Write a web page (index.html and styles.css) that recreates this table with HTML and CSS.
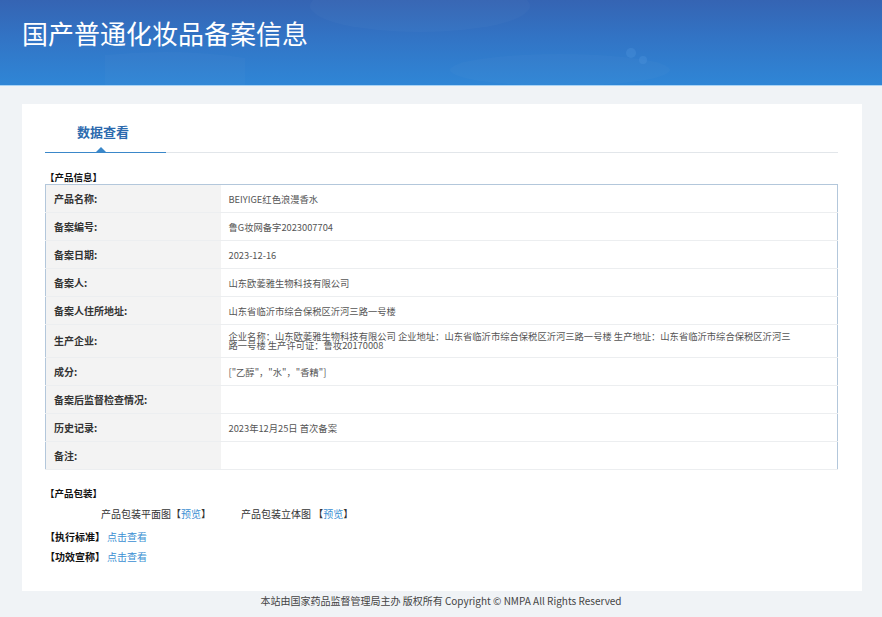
FILE: index.html
```html
<!DOCTYPE html>
<html lang="zh-CN">
<head>
<meta charset="utf-8">
<title>国产普通化妆品备案信息</title>
<link rel="stylesheet" href="styles.css">
</head>
<body>
<header class="banner">
  <svg class="banner-deco" width="882" height="85" viewBox="0 0 882 85" aria-hidden="true">
    <ellipse cx="420" cy="6" rx="110" ry="26" fill="#ffffff" fill-opacity="0.025"/>
    <path d="M105 85 L105 55 Q180 48 245 58 L245 85 Z" fill="#ffffff" fill-opacity="0.02"/>
    <ellipse cx="560" cy="70" rx="110" ry="16" fill="#ffffff" fill-opacity="0.02"/>
    <circle cx="631" cy="53" r="5" fill="#4f95de" fill-opacity="0.35"/>
    <circle cx="643" cy="60" r="4" fill="#4f95de" fill-opacity="0.35"/>
  </svg>
  <h1 class="banner-title">国产普通化妆品备案信息</h1>
</header>

<main class="page">
  <section class="card">
    <div class="tabbar">
      <div class="tab">数据查看</div>
    </div>

    <h2 class="section-title">【产品信息】</h2>
    <table class="info">
      <tbody>
        <tr><th>产品名称:</th><td>BEIYIGE红色浪漫香水</td></tr>
        <tr><th>备案编号:</th><td>鲁G妆网备字2023007704</td></tr>
        <tr><th>备案日期:</th><td>2023-12-16</td></tr>
        <tr><th>备案人:</th><td>山东欧萎雅生物科技有限公司</td></tr>
        <tr><th>备案人住所地址:</th><td>山东省临沂市综合保税区沂河三路一号楼</td></tr>
        <tr class="tall"><th>生产企业:</th><td>企业名称：山东欧萎雅生物科技有限公司 企业地址：山东省临沂市综合保税区沂河三路一号楼 生产地址：山东省临沂市综合保税区沂河三路一号楼 生产许可证：鲁妆20170008</td></tr>
        <tr><th>成分:</th><td>["乙醇"，"水"，"香精"]</td></tr>
        <tr><th>备案后监督检查情况:</th><td></td></tr>
        <tr><th>历史记录:</th><td>2023年12月25日 首次备案</td></tr>
        <tr><th>备注:</th><td></td></tr>
      </tbody>
    </table>

    <h2 class="section-title pack-title">【产品包装】</h2>
    <div class="pack-row">
      <span class="pack-item">产品包装平面图【<a class="link" href="#">预览</a>】</span>
      <span class="pack-item">产品包装立体图 【<a class="link" href="#">预览</a>】</span>
    </div>
    <p class="line first"><b>【执行标准】</b><a class="link" href="#">点击查看</a></p>
    <p class="line"><b>【功效宣称】</b><a class="link" href="#">点击查看</a></p>
  </section>
  <footer class="footer">本站由国家药品监督管理局主办 版权所有 Copyright © NMPA All Rights Reserved</footer>
</main>
</body>
</html>
```

FILE: styles.css
```css
* { box-sizing: border-box; }

html, body {
  margin: 0;
  padding: 0;
}

body {
  background: #f0f3f6;
  font-family: "Noto Sans CJK SC", "Noto Sans", sans-serif;
  color: #333;
}

.banner {
  position: relative;
  height: 86px;
  background: linear-gradient(180deg, #3564b3 0%, #3274c5 45%, #2f86d6 100%);
  border-bottom: 1px solid #a9d3f5;
  overflow: hidden;
}

.banner-deco {
  position: absolute;
  left: 0;
  top: 0;
}

.banner-title {
  position: relative;
  margin: 0;
  padding: 19px 0 0 22px;
  font-size: 26px;
  line-height: 28px;
  font-weight: 400;
  color: #ffffff;
}

.page {
  padding-top: 18px;
}

.card {
  margin: 0 20px 0 22px;
  background: #ffffff;
  padding: 0 24px 26px 23px;
  height: 487px;
}

.tabbar {
  height: 49px;
  border-bottom: 1px solid #e2e6ea;
  display: flex;
  align-items: flex-end;
}

.tab {
  position: relative;
  width: 121px;
  height: 49px;
  padding: 21px 5px 0 0;
  text-align: center;
  font-size: 13px;
  line-height: 14px;
  font-weight: 700;
  color: #2c6aae;
  border-bottom: 1px solid #3a87c9;
  margin-bottom: -1px;
}

.tab::after {
  content: "";
  position: absolute;
  left: 51px;
  bottom: 0;
  width: 0;
  height: 0;
  border-left: 5px solid transparent;
  border-right: 5px solid transparent;
  border-bottom: 5px solid #3a87c9;
}

.section-title {
  margin: 0;
  padding-top: 18px;
  font-size: 9.5px;
  line-height: 13px;
  font-weight: 700;
  color: #111;
}

.info {
  width: 100%;
  border-collapse: collapse;
  border: 1px solid #b3c7db;
  font-size: 9.3px;
}

.info th,
.info td {
  height: 28px;
  padding: 0 8px;
  border-bottom: 1px solid #eceef0;
  line-height: 12px;
  vertical-align: middle;
  text-align: left;
}

.info th {
  width: 175px;
  background: #f3f3f3;
  font-weight: 700;
  font-size: 10px;
  color: #333;
}

.info td {
  color: #555;
  padding-right: 43px;
}

.info tr.tall th,
.info tr.tall td {
  height: 33px;
  line-height: 9.5px;
  padding-top: 4px;
  padding-bottom: 4px;
}

.pack-title {
  padding-top: 17px;
}

.pack-row {
  display: flex;
  gap: 30px;
  padding-left: 56px;
  margin-top: 7px;
  font-size: 10px;
  line-height: 13px;
  color: #333;
}

.line {
  margin: 7px 0 0;
  font-size: 10px;
  line-height: 13px;
  color: #111;
}

.line.first {
  margin-top: 10px;
}

.line b {
  margin-right: 2px;
}

.link {
  color: #3b8fd3;
  text-decoration: none;
}

.footer {
  padding: 4px 0 6px;
  text-align: center;
  font-size: 10px;
  line-height: 12px;
  color: #444;
}
```
